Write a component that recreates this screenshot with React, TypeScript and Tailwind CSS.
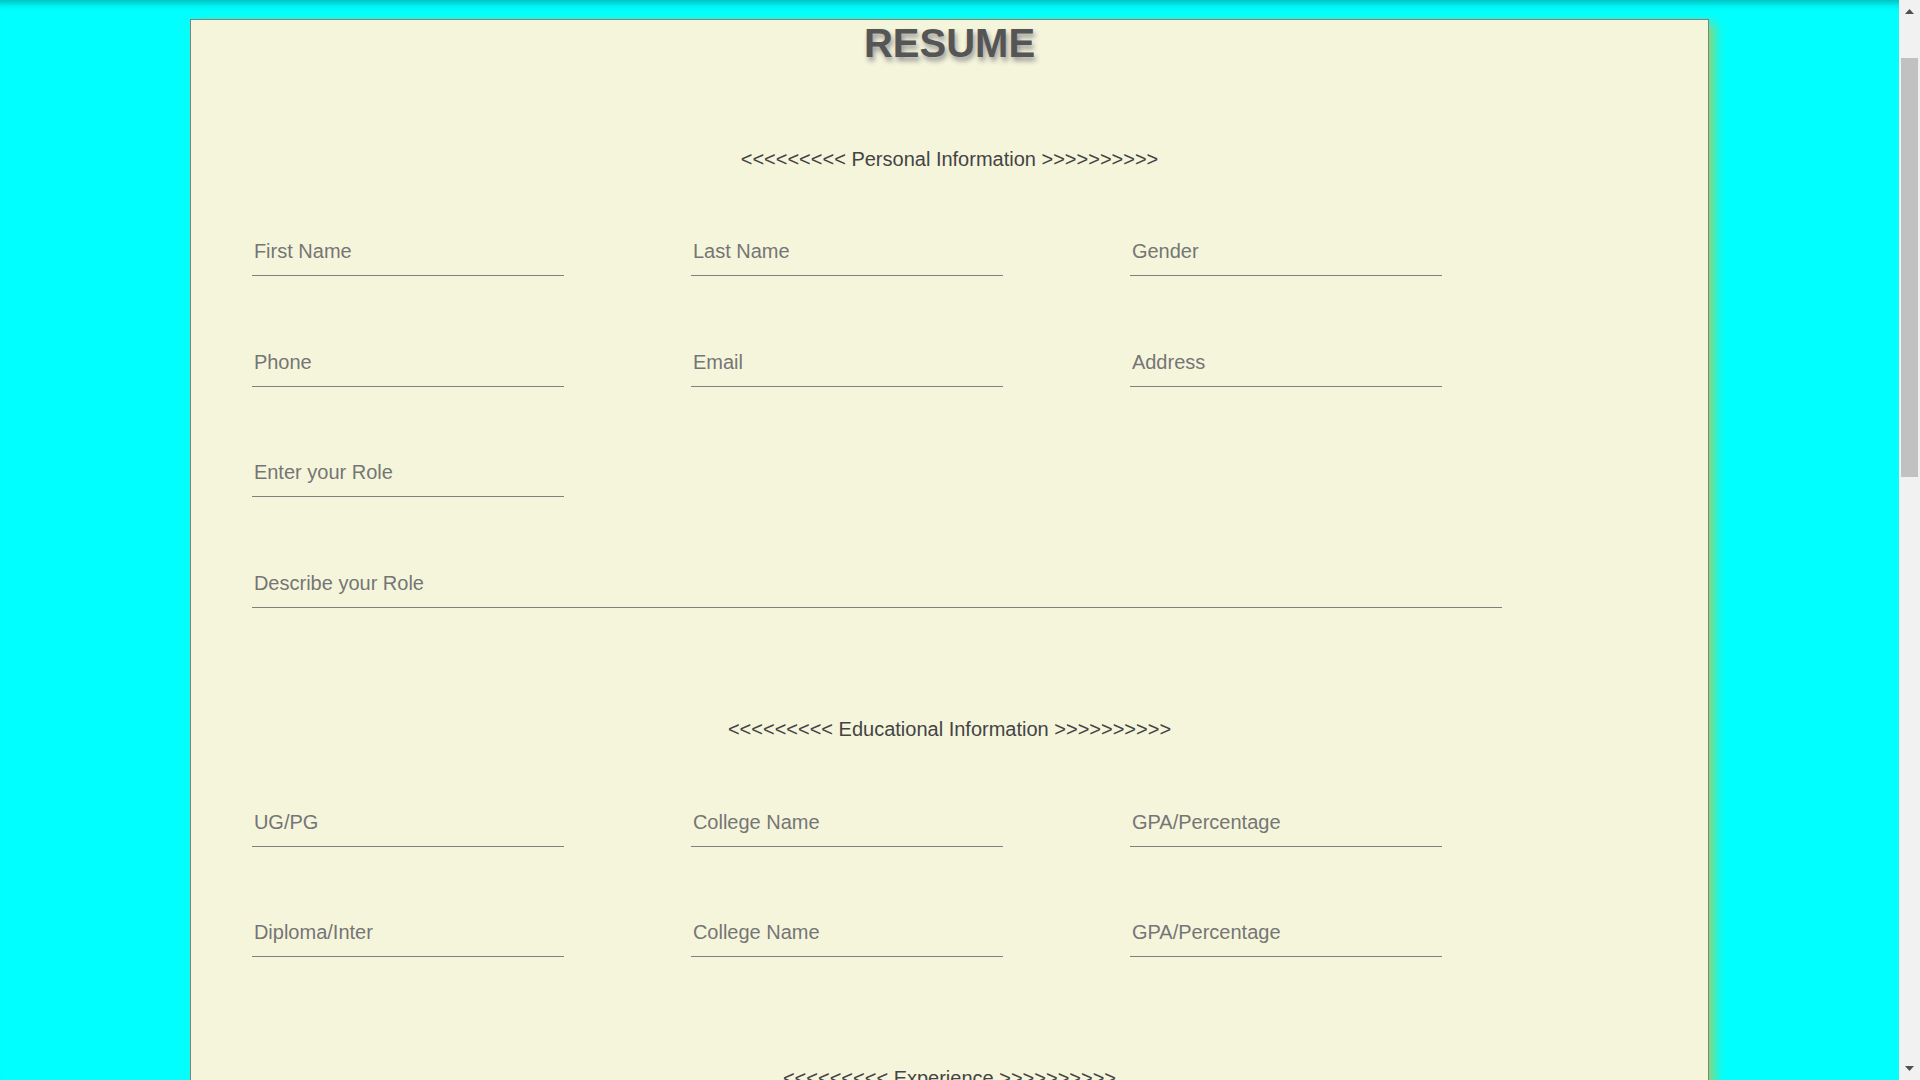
const font = { fontFamily: '"Liberation Sans", Arial, sans-serif' };

function Field({ placeholder, wide }: { placeholder: string; wide?: boolean }) {
  return (
    <input
      type="text"
      placeholder={placeholder}
      className={`${wide ? "w-[1250px]" : "w-[312px]"} h-[36px] border-b border-[#808080] bg-transparent px-[2px] pt-0 pb-[12px] text-[20px] leading-[23px] text-[#333] outline-none placeholder:text-[#757575]`}
    />
  );
}

function Row({ fields, className }: { fields: string[]; className: string }) {
  return (
    <div className={`flex gap-[127px] pl-[61px] ${className}`}>
      {fields.map((f, i) => (
        <Field key={i} placeholder={f} />
      ))}
    </div>
  );
}

function Section({ title, className }: { title: string; className: string }) {
  return (
    <p className={`text-center text-[20px] leading-[23px] text-[#444] ${className}`}>
      {"<<<<<<<<< "}
      {title}
      {" >>>>>>>>>>"}
    </p>
  );
}

// window scrollbar, as it shows in the screenshot
function ScrollBar() {
  return (
    <div className="fixed top-0 right-0 flex h-screen w-[21px] flex-col items-center bg-[#f1f1f1]">
      <div className="flex h-[17px] w-full items-end justify-center pb-[3px]">
        <svg width="9" height="5" viewBox="0 0 9 5">
          <path d="M4.5 0L9 5H0z" fill="#505050" />
        </svg>
      </div>
      <div className="mt-[41px] h-[419px] w-[17px] bg-[#c1c1c1]" />
      <div className="flex-1" />
      <div className="flex h-[17px] w-full items-start justify-center pt-[3px]">
        <svg width="9" height="5" viewBox="0 0 9 5">
          <path d="M0 0H9L4.5 5z" fill="#505050" />
        </svg>
      </div>
    </div>
  );
}

export default function App() {
  return (
    <div
      className="min-h-screen bg-[#00ffff] pt-[19px] pr-[21px] pb-[40px] shadow-[inset_0_10px_8px_-8px_rgba(0,0,0,0.35)]"
      style={font}
    >
      <form className="mx-auto w-[80%] border border-[#808080] bg-[#f5f5dc] pb-[120px] shadow-[6px_4px_10px_rgba(190,200,70,0.75)]">
        <h1 className="text-center text-[40px] leading-[46px] font-bold text-[#555] [text-shadow:2px_4px_5px_#999]">
          RESUME
        </h1>

        <Section title="Personal Information" className="mt-[82px]" />
        <Row fields={["First Name", "Last Name", "Gender"]} className="mt-[69px]" />
        <Row fields={["Phone", "Email", "Address"]} className="mt-[75px]" />
        <Row fields={["Enter your Role"]} className="mt-[74px]" />
        <div className="mt-[75px] pl-[61px]">
          <Field placeholder="Describe your Role" wide />
        </div>

        <Section title="Educational Information" className="mt-[110px]" />
        <Row fields={["UG/PG", "College Name", "GPA/Percentage"]} className="mt-[70px]" />
        <Row fields={["Diploma/Inter", "College Name", "GPA/Percentage"]} className="mt-[74px]" />

        <Section title="Experience" className="mt-[110px]" />
        <Row fields={["Company Name", "Designation", "Duration"]} className="mt-[70px]" />
        <Row fields={["Company Name", "Designation", "Duration"]} className="mt-[74px]" />
        <div className="mt-[75px] pl-[61px]">
          <Field placeholder="Describe your Experience" wide />
        </div>

        <Section title="Skills" className="mt-[110px]" />
        <Row fields={["Skill 1", "Skill 2", "Skill 3"]} className="mt-[70px]" />
        <Row fields={["Skill 4", "Skill 5", "Skill 6"]} className="mt-[74px]" />

        <Section title="Projects" className="mt-[110px]" />
        <Row fields={["Project Title", "Technologies Used", "Duration"]} className="mt-[70px]" />
        <div className="mt-[75px] pl-[61px]">
          <Field placeholder="Describe your Project" wide />
        </div>

        <div className="mt-[90px] flex justify-center">
          <button
            type="button"
            className="border border-[#808080] bg-[#e8e8d0] px-[30px] py-[8px] text-[20px] text-[#444]"
          >
            Submit
          </button>
        </div>
      </form>
      <ScrollBar />
    </div>
  );
}
